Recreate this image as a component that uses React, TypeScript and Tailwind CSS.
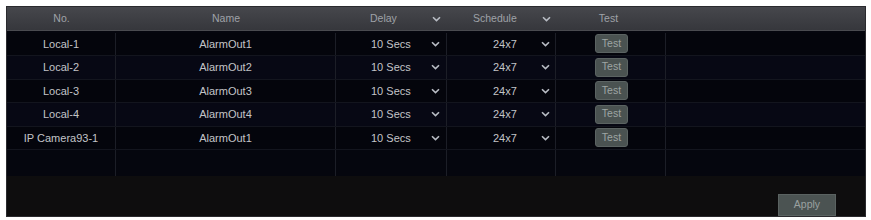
import React from "react";

const rows = [
  { no: "Local-1", name: "AlarmOut1" },
  { no: "Local-2", name: "AlarmOut2" },
  { no: "Local-3", name: "AlarmOut3" },
  { no: "Local-4", name: "AlarmOut4" },
  { no: "IP Camera93-1", name: "AlarmOut1" },
];

function Chevron() {
  return (
    <svg width="9" height="6" viewBox="0 0 9 6" className="shrink-0">
      <path d="M1 1.2 L4.5 4.6 L8 1.2" fill="none" stroke="#b8bcc4" strokeWidth="1.6" />
    </svg>
  );
}

export default function App() {
  return (
    <div className="w-[871px] h-[220px] bg-white pt-[6px] pl-[6px] pr-[5px] pb-[3px]" style={{ fontFamily: '"Liberation Sans", Arial, sans-serif' }}>
      <div className="w-full h-full flex flex-col bg-[#0e0d0e] border border-[#2a2a2e]">
        {/* header */}
        <div className="h-[24px] flex text-[10.5px] text-[#9fa2a8] bg-gradient-to-b from-[#46474c] to-[#36373c] border-b border-[#4a4b50]">
          <div className="w-[109px] flex items-center justify-center">No.</div>
          <div className="w-[220px] flex items-center justify-center">Name</div>
          <div className="w-[111px] flex items-center pl-[34px] pr-[6px] justify-between">
            <span>Delay</span>
            <Chevron />
          </div>
          <div className="w-[109px] flex items-center pl-[26px] pr-[5px] justify-between">
            <span>Schedule</span>
            <Chevron />
          </div>
          <div className="w-[110px] flex items-center justify-center pr-[5px]">Test</div>
          <div className="flex-1" />
        </div>
        {/* body */}
        <div className="h-[145px] flex flex-col bg-[#05060e] pt-[1.5px]">
          {rows.map((r, i) => (
            <div key={i} className={`h-[23.5px] shrink-0 flex text-[11px] text-[#c3c4c8] border-b border-[#13151e] ${i % 2 === 1 ? "bg-[#070814]" : "bg-[#04050c]"}`}>
              <div className="w-[109px] flex items-center justify-center border-r border-[#1c1e27]">{r.no}</div>
              <div className="w-[220px] flex items-center justify-center border-r border-[#1c1e27]">{r.name}</div>
              <div className="w-[111px] flex items-center pl-[35px] pr-[6px] justify-between border-r border-[#1c1e27]">
                <span>10 Secs</span>
                <Chevron />
              </div>
              <div className="w-[109px] flex items-center pl-[46px] pr-[5px] justify-between border-r border-[#1c1e27]">
                <span>24x7</span>
                <Chevron />
              </div>
              <div className="w-[110px] flex items-center border-r border-[#1c1e27] pl-[39px]">
                <div className="w-[33px] h-[19px] rounded-[3px] bg-[#4a5251] border border-[#5b6362] text-[#9ea5a4] text-[10.5px] flex items-center justify-center">Test</div>
              </div>
              <div className="flex-1" />
            </div>
          ))}
          <div className="flex-1 flex">
            <div className="w-[109px] border-r border-[#1c1e27]" />
            <div className="w-[220px] border-r border-[#1c1e27]" />
            <div className="w-[111px] border-r border-[#1c1e27]" />
            <div className="w-[109px] border-r border-[#1c1e27]" />
            <div className="w-[110px] border-r border-[#1c1e27]" />
            <div className="flex-1" />
          </div>
        </div>
        {/* footer */}
        <div className="flex-1 flex items-end justify-end pr-[29px]">
          <div className="w-[58px] h-[22px] bg-[#4b5352] border border-[#5a6261] text-[#9aa1a0] text-[10.5px] flex items-center justify-center">Apply</div>
        </div>
      </div>
    </div>
  );
}
